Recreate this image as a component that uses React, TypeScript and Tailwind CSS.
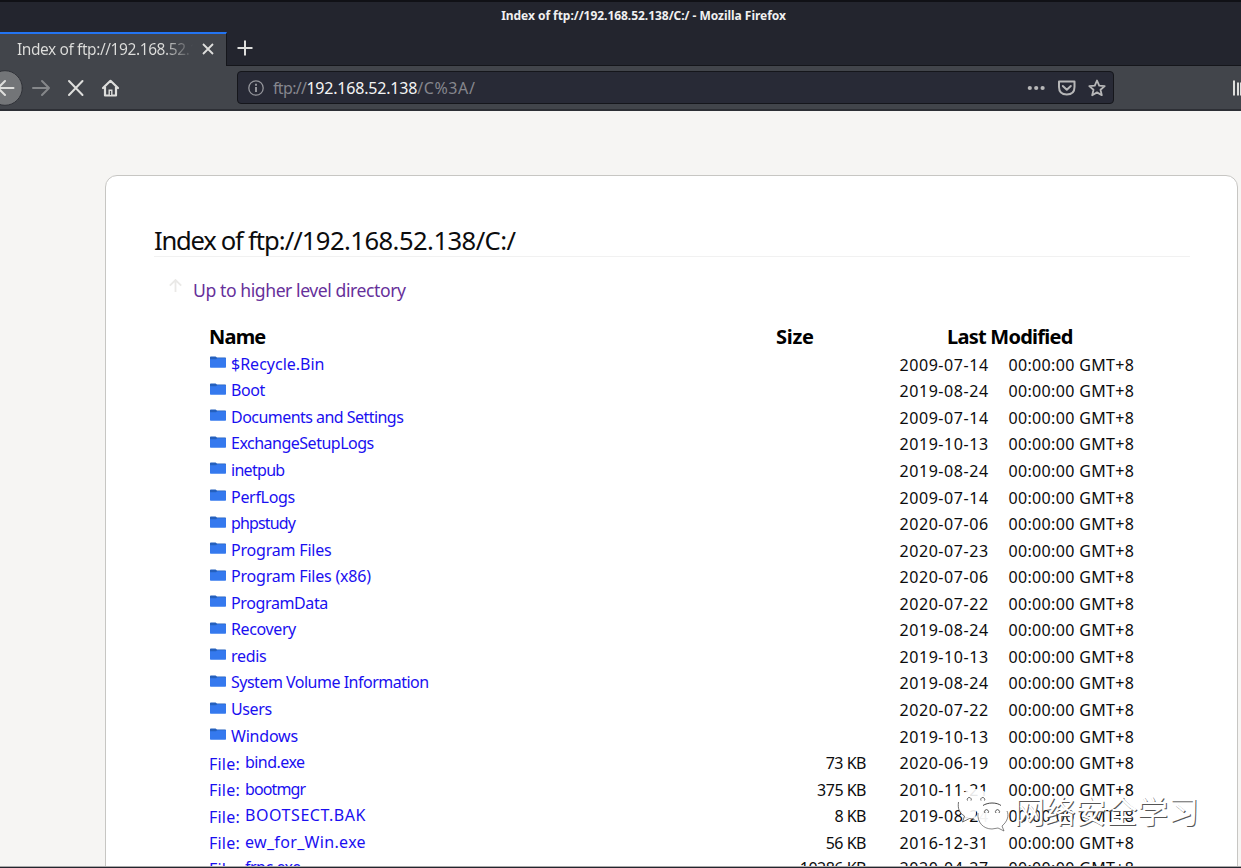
import React from 'react';

type Entry = { name: string; date: string; size?: string; tracking: string };

const entries: Entry[] = [
  { name: '$Recycle.Bin', date: '2009-07-14', tracking: 'tracking-[0px]' },
  { name: 'Boot', date: '2019-08-24', tracking: 'tracking-[-0.4px]' },
  { name: 'Documents and Settings', date: '2009-07-14', tracking: 'tracking-[-0.54px]' },
  { name: 'ExchangeSetupLogs', date: '2019-10-13', tracking: 'tracking-[-0.5px]' },
  { name: 'inetpub', date: '2019-08-24', tracking: 'tracking-[-0.7px]' },
  { name: 'PerfLogs', date: '2009-07-14', tracking: 'tracking-[-0.3px]' },
  { name: 'phpstudy', date: '2020-07-06', tracking: 'tracking-[-0.85px]' },
  { name: 'Program Files', date: '2020-07-23', tracking: 'tracking-[-0.2px]' },
  { name: 'Program Files (x86)', date: '2020-07-06', tracking: 'tracking-[-0.2px]' },
  { name: 'ProgramData', date: '2020-07-22', tracking: 'tracking-[-0.38px]' },
  { name: 'Recovery', date: '2019-08-24', tracking: 'tracking-[-0.38px]' },
  { name: 'redis', date: '2019-10-13', tracking: 'tracking-[-0.3px]' },
  { name: 'System Volume Information', date: '2019-08-24', tracking: 'tracking-[-0.5px]' },
  { name: 'Users', date: '2020-07-22', tracking: 'tracking-[-0.4px]' },
  { name: 'Windows', date: '2019-10-13', tracking: 'tracking-[-0.2px]' },
  { name: 'bind.exe', date: '2020-06-19', size: '73 KB', tracking: 'tracking-[-0.55px]' },
  { name: 'bootmgr', date: '2010-11-21', size: '375 KB', tracking: 'tracking-[-0.9px]' },
  { name: 'BOOTSECT.BAK', date: '2019-08-24', size: '8 KB', tracking: 'tracking-[0.56px]' },
  { name: 'ew_for_Win.exe', date: '2016-12-31', size: '56 KB', tracking: 'tracking-[0.33px]' },
  { name: 'frpc.exe', date: '2020-04-27', size: '10286 KB', tracking: 'tracking-[-0.5px]' },
];

function Folder() {
  return (
    <svg className="mr-[5px] mb-[3px] h-3 w-4 shrink-0" viewBox="0 0 16 12">
      <path d="M0 1.2Q0 .4 .8 .4H5.6L7 1.4H15.2Q16 1.4 16 2.2V5H0Z" fill="#2560bd" />
      <path d="M0 3.2H6L7.4 2.2H16V11Q16 11.7 15.3 11.7H.7Q0 11.7 0 11Z" fill="#3579ee" />
    </svg>
  );
}

function Row({ entry }: { entry: Entry }) {
  return (
    <div className="flex h-[26.57px] shrink-0 items-center text-base leading-6 last:mt-[-1px]">
      <div className="flex w-[561px] items-center text-[#1a0ff0]">
        {entry.size ? <span className="mr-1 ml-[-1px] w-8 pt-[3px] tracking-[0.2px]">File:</span> : <Folder />}
        <span className={entry.tracking}>{entry.name}</span>
      </div>
      <div className="w-[95px] pt-[2px] text-right tracking-[-0.5px]">{entry.size}</div>
      <div className="ml-[33.5px] w-[109px] pt-[2px] tracking-[0.56px]">{entry.date}</div>
      <div className="pt-[2px] tracking-[0.34px]">00:00:00 GMT+8</div>
    </div>
  );
}

function Watermark() {
  return (
    <div className="absolute top-[785px] left-[956px] flex items-center">
      <svg className="h-[50px] w-[56px]" viewBox="0 0 56 50" fill="none">
        <path d="M19 4C9 4 2 11 2 19c0 6 3 10 6 12l-2 6 7-4 7 1C18 25 24 17 36 17 34 9 28 4 19 4Z" fill="white" fillOpacity=".9" />
        <path d="M2.500 17c-1 7 1 11 6 14l-2 6 7-3.500 5 1" stroke="#333" strokeWidth=".7" />
        <path d="M36 18c-9 0-15 6-15 13s6 13 15 13l6-1 6 3-2-5c4-3 6-6 6-10 0-7-7-13-16-13Z" fill="white" fillOpacity=".94" />
        <path d="M27 20.500c2-1.500 6-2.500 9-2.500 4 0 7 1 9 2.500" stroke="#333" strokeWidth=".9" />
        <path d="M22 28c-1 9 5 16 14 16l6-1 6 3-2-5c6-5 7-11 5-15" stroke="#555" strokeWidth=".7" />
        <path d="M11.500 15.500a2 2 0 1 1 3.500 0M25 15.500a2 2 0 1 1 3.500 0M29 28a2 2 0 1 1 3 0M40 28a2 2 0 1 1 3 0" stroke="#555" strokeWidth="1" />
      </svg>
      <span className="ml-[2px] text-[30.8px] leading-[50px] whitespace-nowrap text-white [font-family:'Noto_Sans_CJK_SC',sans-serif] [text-shadow:1px_1px_0_#555]">
        网络安全学习
      </span>
    </div>
  );
}

export default function App() {
  return (
    <div className="relative flex h-[868px] w-[1241px] flex-col overflow-hidden bg-[#f6f5f3] text-[#0c0c0d] [font-family:'Noto_Sans',sans-serif]">
      <header className="h-[32px] shrink-0 border-t-2 border-[#101116] bg-[#23252e] text-center text-[12px] leading-[27px] font-bold text-[#f0f0f0]">
        <span className="ml-[46px] tracking-[-0.04px]">Index of ftp://192.168.52.138/C:/ - Mozilla Firefox</span>
      </header>

      <div className="flex h-[34px] shrink-0 border-b border-[#15161b] bg-[#23252e]">
        <div className="flex h-[34px] w-[227px] items-center border-t-2 border-r border-t-[#2374f2] border-r-[#15161b] bg-[#42454b] pl-[17px]">
          <div className="mt-[-2px] w-[178px] overflow-hidden bg-[linear-gradient(90deg,#dededc_82%,transparent_99%)] bg-clip-text text-[15.5px] leading-6 tracking-[-0.42px] whitespace-nowrap text-transparent">
            Index of ftp://192.168.52.138/C:/
          </div>
          <svg className="mt-[-2px] ml-[7px] size-3 shrink-0" viewBox="0 0 12 12" stroke="#dededc" strokeWidth="1.8">
            <path d="M1 1 11 11M11 1 1 11" />
          </svg>
        </div>
        <svg className="mt-[8px] ml-[10px] size-4" viewBox="0 0 16 16" stroke="#dededc" strokeWidth="2">
          <path d="M8 .5V15.500M.5 8H15.500" />
        </svg>
      </div>

      <nav className="flex h-[45px] shrink-0 items-center border-b-2 border-[#2d2f35] bg-[#42454b]">
        <svg className="h-[44px] w-[128px] shrink-0" viewBox="0 0 128 44" fill="none" stroke="#dededc" strokeWidth="2" strokeLinecap="round" strokeLinejoin="round">
          <circle cx="5" cy="22" r="17.3" fill="#737578" stroke="#303238" strokeWidth="1" />
          <path d="M13.500 22H-2M5 15-2 22 5 29" />
          <path d="M33 22H49M42 15 49 22 42 29" stroke="#85878a" />
          <path d="M69 15 82.500 29M82.500 15 69 29" />
          <path d="M103 22 110.500 14.800 118 22M105 21V29.500H116V21" strokeWidth="2.200" />
          <path d="M110.500 29V23.500" strokeWidth="4" strokeLinecap="butt" />
          <path d="M110.500 29V25" stroke="#42454b" strokeWidth="1.200" strokeLinecap="butt" />
        </svg>
        <div className="ml-[109px] flex h-[33px] w-[877px] shrink-0 items-center rounded-[4px] border border-[#15161b] bg-[#282a36] pl-[10px]">
          <svg className="size-4 shrink-0" viewBox="0 0 16 16" fill="none" stroke="#94959b">
            <circle cx="8" cy="8" r="7.2" strokeWidth="1.3" />
            <path d="M8 7V12M8 3.800V5.700" strokeWidth="2" />
          </svg>
          <div className="ml-[9px] w-[754px] text-[16px] leading-6 whitespace-pre text-[#85868d]">
            <span className="tracking-[-0.65px]">ftp://</span>
            <span className="tracking-[-0.2px] text-[#f4f4f4]">192.168.52.138</span>
            <span className="tracking-[0.6px]">/C%3A/</span>
          </div>
          <svg className="h-5 w-[80px] shrink-0" viewBox="0 0 80 20" fill="none" stroke="#b7b7b8" strokeWidth="2" strokeLinejoin="round">
            <g fill="#b7b7b8" stroke="none">
              <circle cx="2.800" cy="10" r="2.100" />
              <circle cx="9.200" cy="10" r="2.100" />
              <circle cx="15.600" cy="10" r="2.100" />
            </g>
            <path d="M32 3.500H47.500V9Q47.500 16.500 39.800 16.500T32 9ZM35.800 8 39.800 11.800 43.800 8" strokeLinecap="round" />
            <path d="M70 2.500 72.200 7.600 77.700 8.100 73.500 11.700 74.800 17.200 70 14.400 65.200 17.200 66.500 11.700 62.300 8.100 67.800 7.600Z" strokeWidth="1.800" />
          </svg>
        </div>
        <svg className="ml-[119px] h-4 w-[8px] shrink-0" viewBox="0 0 8 16" stroke="#dededc" strokeWidth="2">
          <path d="M1 .5V15.500M5 2.500V15.500M8 2.500V15.500" />
        </svg>
      </nav>

      <main className="mt-[64px] ml-[105px] h-[900px] w-[1133px] shrink-0 rounded-[12px] border border-[#c7c6c3] bg-white pt-[46px] pl-12">
        <h1 className="h-[35px] w-[1036px] border-b border-[#f1f1f1] text-[25.6px] leading-[38px] whitespace-pre">
          <span className="tracking-[-1.25px]">Index of </span>
          <span className="tracking-[-1px]">ftp://</span>
          <span className="tracking-[-0.55px]">192.168.52.138/C:/</span>
        </h1>
        <div className="mt-[20px] flex h-[26px] items-center pl-[15px] text-[17.6px] leading-[26px] tracking-[-0.43px] text-[#66309a]">
          <svg className="mt-[-10px] mr-[11px] size-[13px]" viewBox="0 0 13 13" fill="none" stroke="#eae9e7" strokeWidth="1.800">
            <path d="M6.500 13V1M.8 6.700 6.500 1 12.200 6.700" />
          </svg>
          Up to higher level directory
        </div>
        <div className="mt-[19px] flex h-[29px] items-center pl-[55px] text-[20px] leading-[30px] font-bold text-black">
          <div className="w-[567px] tracking-[-0.8px]">Name</div>
          <div className="w-[171px] tracking-[-0.3px]">Size</div>
          <div className="tracking-[-0.75px]">Last Modified</div>
        </div>
        <div className="mt-[-0.6px] flex flex-col pl-[56px]">
          {entries.map((entry) => (
            <Row key={entry.name} entry={entry} />
          ))}
        </div>
      </main>
      <div className="absolute bottom-0 left-0 h-[2px] w-full border-t border-[#aaa] bg-[#23252e]" />
      <Watermark />
    </div>
  );
}
